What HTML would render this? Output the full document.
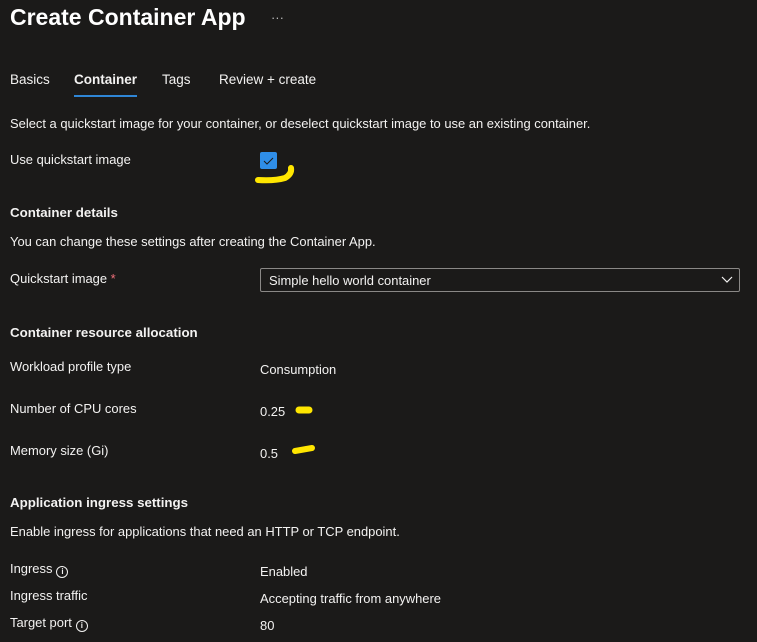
<!DOCTYPE html>
<html><head><meta charset="utf-8"><style>
body{margin:0;width:757px;height:642px;background:#1b1a19;color:#f3f2f1;font-family:"Liberation Sans",sans-serif;font-size:12.95px;position:relative;overflow:hidden}
.a{position:absolute;white-space:nowrap}
h1{position:absolute;left:10px;top:4px;margin:0;font-size:23px;font-weight:600;color:#fff}
.b{font-weight:bold;font-size:13.3px}
.i{display:inline-block;width:10px;height:10px;border:1px solid #f3f2f1;border-radius:50%;font-size:8px;text-align:center;line-height:10px;vertical-align:-1px;margin-left:4px;font-weight:bold}
</style></head><body>
<h1>Create Container App</h1>
<div class="a" style="left:271px;top:10px;color:#bbb">···</div>
<div class="a" style="left:10px;top:72px;font-size:13.5px">Basics</div>
<div class="a" style="left:74px;top:72px;font-size:13.5px;font-weight:600">Container</div>
<div class="a" style="left:74px;top:95px;width:63px;height:2px;background:#2f86d6"></div>
<div class="a" style="left:162px;top:72px;font-size:13.5px">Tags</div>
<div class="a" style="left:219px;top:72px;font-size:13.5px">Review + create</div>
<div class="a" style="left:10px;top:116px">Select a quickstart image for your container, or deselect quickstart image to use an existing container.</div>
<div class="a" style="left:10px;top:152px">Use quickstart image</div>
<div class="a" style="left:260px;top:152px;width:17px;height:17px;background:#2f8ee8;border-radius:2px"></div>
<svg class="a" style="left:0;top:0" width="757" height="642">
<path d="M264 161 l3 3 l6 -6" stroke="#1b1a19" stroke-width="1" fill="none"/>
<path d="M258 180 Q275 181 285 178 Q292 174 291 168" stroke="#ffe600" stroke-width="6" fill="none" stroke-linecap="round"/>
<path d="M299 410 L309 410" stroke="#ffe600" stroke-width="7" stroke-linecap="round"/>
<path d="M295 451 L312 448" stroke="#ffe600" stroke-width="6" stroke-linecap="round"/>
<path d="M722 277 l5 5 l5 -5" stroke="#f3f2f1" stroke-width="1.2" fill="none"/>
</svg>
<div class="a b" style="left:10px;top:205px">Container details</div>
<div class="a" style="left:10px;top:234px">You can change these settings after creating the Container App.</div>
<div class="a" style="left:10px;top:271px">Quickstart image <span style="color:#f1707b">*</span></div>
<div class="a" style="left:260px;top:268px;width:478px;height:22px;border:1px solid #8a8886;border-radius:2px"></div>
<div class="a" style="left:269px;top:273px">Simple hello world container</div>
<div class="a b" style="left:10px;top:325px">Container resource allocation</div>
<div class="a" style="left:10px;top:359px">Workload profile type</div>
<div class="a" style="left:260px;top:362px">Consumption</div>
<div class="a" style="left:10px;top:401px">Number of CPU cores</div>
<div class="a" style="left:260px;top:404px">0.25</div>
<div class="a" style="left:10px;top:443px">Memory size (Gi)</div>
<div class="a" style="left:260px;top:446px">0.5</div>
<div class="a b" style="left:10px;top:495px">Application ingress settings</div>
<div class="a" style="left:10px;top:524px">Enable ingress for applications that need an HTTP or TCP endpoint.</div>
<div class="a" style="left:10px;top:561px">Ingress<span class="i">i</span></div>
<div class="a" style="left:260px;top:564px">Enabled</div>
<div class="a" style="left:10px;top:588px">Ingress traffic</div>
<div class="a" style="left:260px;top:591px">Accepting traffic from anywhere</div>
<div class="a" style="left:10px;top:615px">Target port<span class="i">i</span></div>
<div class="a" style="left:260px;top:618px">80</div>
</body></html>
